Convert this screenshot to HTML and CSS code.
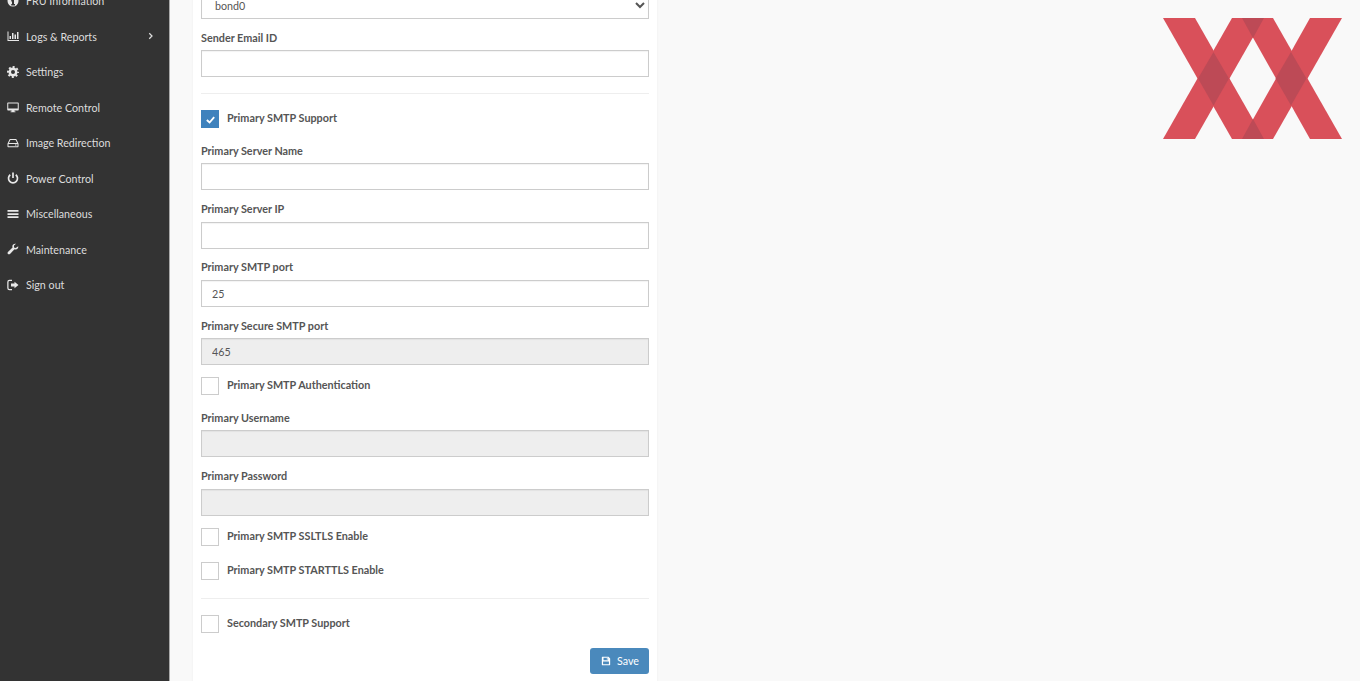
FILE: index.html
```html
<!DOCTYPE html>
<html lang="en">
<head>
  <meta charset="UTF-8" />
  <meta name="viewport" content="width=device-width, initial-scale=1.0" />
  <title>SMTP Settings</title>
  <link rel="stylesheet" href="styles.css">
</head>
<body>
  <div class="layout">
    <aside class="sidebar">
      <ul class="menu">
        <li class="menu-item">
          <svg class="menu-icon" viewBox="0 0 24 24"><path fill-rule="evenodd" d="M12 1a11 11 0 1 0 0 22 11 11 0 0 0 0-22zM10 4h4v4h-4zM8.500 10h5.500v8h2v3H8.500v-3h1.500v-5H8.500z"/></svg>
          <span>FRU Information</span>
        </li>
        <li class="menu-item">
          <svg class="menu-icon" viewBox="0 0 24 24"><path d="M1 3h2v17h21v2H1zM5 12h3v6H5zM10 6h3v12h-3zM15 9h3v9h-3zM20 4h3v14h-3z"/></svg>
          <span>Logs &amp; Reports</span>
          <svg class="menu-arrow" viewBox="0 0 10 16"><path d="M2.500 2.500 8 8l-5.500 5.500" /></svg>
        </li>
        <li class="menu-item">
          <svg class="menu-icon" viewBox="0 0 24 24"><circle class="gear-ring" cx="12" cy="12" r="6.500"/><circle class="gear-teeth" cx="12" cy="12" r="10"/></svg>
          <span>Settings</span>
        </li>
        <li class="menu-item">
          <svg class="menu-icon" viewBox="0 0 24 24"><path fill-rule="evenodd" d="M2 3h20a1.500 1.500 0 0 1 1.500 1.500v13A1.500 1.500 0 0 1 22 19h-7v2h2v1.500H7V21h2v-2H2a1.500 1.500 0 0 1-1.500-1.500v-13A1.500 1.500 0 0 1 2 3zm.5 2v10h19V5z"/></svg>
          <span>Remote Control</span>
        </li>
        <li class="menu-item">
          <svg class="menu-icon" viewBox="0 0 24 24"><path fill-rule="evenodd" d="M5.500 4h13l4.500 9v6a1.500 1.500 0 0 1-1.500 1.500h-19A1.500 1.500 0 0 1 1 19v-6zm1.300 2L3.800 12h16.400l-3-6zM3 14v4.500h18V14zm13 1h2v2h-2zm3 0h1v2h-1z"/></svg>
          <span>Image Redirection</span>
        </li>
        <li class="menu-item">
          <svg class="menu-icon" viewBox="0 0 24 24"><path d="M10.300 1h3.400v11h-3.400z"/><path class="icon-line" d="M6.500 5.500a9 9 0 1 0 11 0"/></svg>
          <span>Power Control</span>
        </li>
        <li class="menu-item">
          <svg class="menu-icon" viewBox="0 0 24 24"><path d="M1 4h22v3.500H1zM1 10.300h22v3.500H1zM1 16.500h22V20H1z"/></svg>
          <span>Miscellaneous</span>
        </li>
        <li class="menu-item">
          <svg class="menu-icon" viewBox="0 0 24 24"><path d="M22.500 6.500c.5 3-1.500 6.500-5.500 6.500-.8 0-1.500-.1-2-.4L6 21.800c-1.200 1.200-3 1.200-4.100 0-1.100-1.200-1.100-2.900 0-4l9.200-9c-.3-.7-.4-1.400-.4-2.200C10.700 3 14.200 .5 18 1.500l-4 3.700v3.600l3.400 1z"/></svg>
          <span>Maintenance</span>
        </li>
        <li class="menu-item">
          <svg class="menu-icon" viewBox="0 0 24 24"><path d="M15 5.500l8 6.500-8 6.500V15H8V9h7z"/><path d="M10 4H5a2 2 0 0 0-2 2v12a2 2 0 0 0 2 2h5v2.500H5A4.500 4.500 0 0 1 .5 18V6A4.500 4.500 0 0 1 5 1.500h5z"/></svg>
          <span>Sign out</span>
        </li>
      </ul>
    </aside>

    <main class="content">
      <form class="panel">
        <div class="field">
          <select class="control">
            <option>bond0</option>
          </select>
        </div>
        <div class="field">
          <label class="field-label">Sender Email ID</label>
          <input class="control" type="text" />
        </div>
        <hr class="divider" />
        <label class="check">
          <span class="box box-on">
            <svg viewBox="0 0 12 12"><path d="M2 6.500 5 9.300 10 3.500" /></svg>
          </span>
          Primary SMTP Support
        </label>
        <div class="field">
          <label class="field-label">Primary Server Name</label>
          <input class="control" type="text" />
        </div>
        <div class="field">
          <label class="field-label">Primary Server IP</label>
          <input class="control" type="text" />
        </div>
        <div class="field">
          <label class="field-label">Primary SMTP port</label>
          <input class="control" type="text" value="25" />
        </div>
        <div class="field">
          <label class="field-label">Primary Secure SMTP port</label>
          <input class="control" type="text" value="465" disabled />
        </div>
        <label class="check"><span class="box"></span>Primary SMTP Authentication</label>
        <div class="field">
          <label class="field-label">Primary Username</label>
          <input class="control" type="text" disabled />
        </div>
        <div class="field">
          <label class="field-label">Primary Password</label>
          <input class="control" type="password" disabled />
        </div>
        <label class="check"><span class="box"></span>Primary SMTP SSLTLS Enable</label>
        <label class="check"><span class="box"></span>Primary SMTP STARTTLS Enable</label>
        <hr class="divider divider-low" />
        <label class="check"><span class="box"></span>Secondary SMTP Support</label>
        <div class="actions">
          <button class="btn-save" type="button">
            <svg viewBox="0 0 24 24"><path fill-rule="evenodd" d="M3 2h15l4 4v15a1 1 0 0 1-1 1H3a1 1 0 0 1-1-1V3a1 1 0 0 1 1-1zm3 2v6h11V4zm8 .8h2v4.400h-2zM5 13v7h14v-7z"/></svg>
            Save
          </button>
        </div>
      </form>

      <svg class="logo" viewBox="1160 18 185 122">
        <path class="logo-strand" d="M1163 18h32l69 121h-32z" />
        <path class="logo-strand" d="M1232 18h32l-69 121h-32z" />
        <path class="logo-strand" d="M1242 18h31l69 121h-32z" />
        <path class="logo-strand" d="M1310 18h32l-69 121h-31z" />
        <path class="logo-cross" d="M1213.500 52l15.500 26.500-15.500 27-15.500-27z" />
        <path class="logo-cross" d="M1291 52l15.500 26.500-15.500 27-15.500-27z" />
        <path class="logo-cross" d="M1242 18h22l-11 20z" />
        <path class="logo-cross" d="M1242 139h22l-11-20z" />
      </svg>
    </main>
  </div>
</body>
</html>
```

FILE: styles.css
```css
html, body { margin: 0; height: 100%; overflow: hidden; }
body { font-family: "Lato", "Open Sans", sans-serif; font-size: 10.700px; color: #444; background: #f9f9f9; }
.layout { display: flex; height: 681px; overflow: hidden; }

.sidebar { width: 169px; flex: none; background: #333; border-right: 1px solid #aaa; color: #ddd; overflow: hidden; }
.menu { list-style: none; margin: -17px 0 0; padding: 0; }
.menu-item { display: flex; align-items: center; height: 35.500px; padding-left: 7px; position: relative; }
.menu-icon { width: 12px; height: 12px; margin-right: 7px; fill: #e8e8e8; flex: none; }
.icon-line { fill: none; stroke: #e8e8e8; stroke-width: 3.400; }
.gear-ring { fill: none; stroke: #e8e8e8; stroke-width: 5; }
.gear-teeth { fill: none; stroke: #e8e8e8; stroke-width: 4; stroke-dasharray: 3.930 3.930; stroke-dashoffset: 1.960; }
.menu-arrow { position: absolute; left: 148px; top: 13.500px; width: 5px; height: 8px; fill: none; stroke: #ddd; stroke-width: 2.500; }

.content { flex: 1; display: flex; align-items: flex-start; padding-left: 23px; }
.panel { display: flex; flex-direction: column; width: 448px; height: 720px; flex: none; padding: 0 8px; margin-top: -8px; background: #fff; box-shadow: 0 0 2px rgba(0,0,0,0.06); }
.field { margin-bottom: 10.800px; }
.field-label { display: block; height: 16.500px; line-height: 16.500px; margin-bottom: 4px; font-size: 10.800px; font-weight: 700; color: #555; }
.control { display: block; box-sizing: border-box; width: 100%; height: 27px; padding: 0 10px; border: 1px solid #ccc; background: #fff; font: inherit; color: #555; border-radius: 0; box-shadow: inset 0 1px 1px rgba(0,0,0,0.05); }
.control:disabled { background: #eee; border-color: #ccc; opacity: 1; }
select.control { padding-left: 9px; }
.divider { width: 100%; height: 1px; flex: none; margin: 5.200px 0 16px; border: none; background: #eee; }
.divider-low { margin-top: 4.200px; }

.check { display: flex; align-items: flex-start; flex: none; height: 18px; line-height: 15px; margin-bottom: 14.500px; font-size: 10.800px; font-weight: 700; color: #555; }
.field + .check { margin-top: 1.500px; }
.check + .check { margin-top: 1px; }
.box { box-sizing: border-box; width: 18px; height: 18px; margin-right: 8px; border: 1px solid #ccc; background: #fff; display: flex; align-items: center; justify-content: center; flex: none; }
.box-on { background: #3f82bd; border-color: #3f82bd; }
.box svg { width: 11px; height: 11px; fill: none; stroke: #fff; stroke-width: 2; }

.actions { display: flex; justify-content: flex-end; }
.btn-save { display: flex; align-items: center; gap: 6px; height: 26px; padding: 0 10px 0 11px; border: none; border-radius: 3px; background: #4a89bc; color: #fff; font: inherit; cursor: pointer; }
.btn-save svg { width: 10px; height: 10px; fill: #fff; }

.logo { position: absolute; left: 1160px; top: 18px; width: 185px; height: 122px; }
.logo-strand { fill: #d9505a; }
.logo-cross { fill: #bd4a56; }
```
